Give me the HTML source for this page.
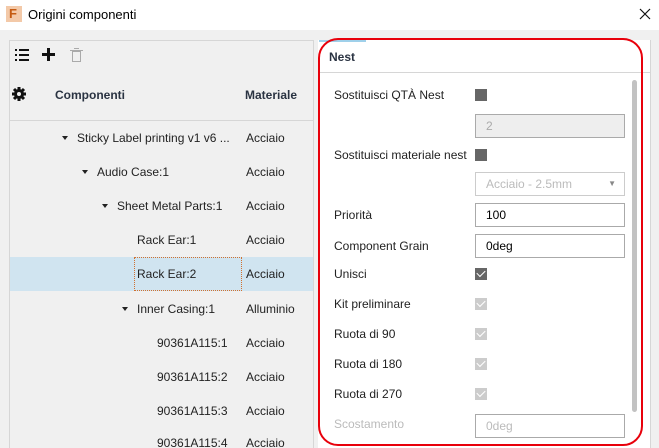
<!DOCTYPE html><html style="overflow:hidden;height:448px"><head><style>
body{margin:0;width:659px;height:448px;background:#f0f0f0;font-family:"Liberation Sans",sans-serif;font-size:12px;color:#222;position:relative;overflow:hidden}
.a{position:absolute;white-space:nowrap}
.cb{position:absolute;width:12px;height:12px;background:#666}
.cbd{position:absolute;width:12px;height:12px;background:#ccc}
.in{position:absolute;left:475px;width:148px;height:22px;border:1px solid #aaa;background:#fff;line-height:22px;text-indent:10px}
.ck{position:absolute;left:2px;top:2px;width:7px;height:4px;border-left:1.5px solid #fff;border-bottom:1.5px solid #fff;transform:rotate(-45deg)}
.tri{position:absolute;width:0;height:0;border-left:3px solid transparent;border-right:3px solid transparent;border-top:4px solid #222}
</style></head><body>
<div class="a" style="left:0;top:0;width:659px;height:30px;background:#fff"></div>
<div class="a" style="left:6px;top:6px;width:16px;height:16px;background:#f3c9a8"></div>
<div class="a" style="left:9px;top:6px;color:#c55a11;font-weight:bold;font-size:13px">F</div>
<div class="a" style="left:28px;top:7px;font-size:13px;color:#000">Origini componenti</div>
<svg class="a" style="left:639px;top:8px" width="12" height="12"><path d="M1 1L11 11M11 1L1 11" stroke="#111" stroke-width="1.2"/></svg>
<div class="a" style="left:9px;top:40px;width:303px;height:410px;border-left:1px solid #d6d6d6;border-top:1px solid #d6d6d6;border-right:1px solid #d6d6d6"></div>
<svg class="a" style="left:15px;top:47px" width="70" height="16"><g fill="#111"><rect x="0" y="2" width="2" height="2"/><rect x="4" y="2" width="10" height="2"/><rect x="0" y="7" width="2" height="2"/><rect x="4" y="7" width="10" height="2"/><rect x="0" y="12" width="2" height="2"/><rect x="4" y="12" width="10" height="2"/><rect x="27" y="6" width="13" height="3"/><rect x="32" y="1" width="3" height="13"/></g><g fill="none" stroke="#aaa"><rect x="57.5" y="4.5" width="8" height="10"/><path d="M55 3.5h13M59 1.5h5"/></g></svg>
<svg class="a" style="left:12px;top:87px" width="14" height="14" viewBox="0 0 14 14"><g fill="#111"><circle cx="7" cy="7" r="5"/><g stroke="#111" stroke-width="3"><path d="M7 0v14M0 7h14M2 2l10 10M12 2L2 12"/></g></g><circle cx="7" cy="7" r="2" fill="#f0f0f0"/></svg>
<div class="a" style="left:55px;top:88px;font-weight:bold;color:#2a3342">Componenti</div>
<div class="a" style="left:245px;top:88px;font-weight:bold;color:#2a3342">Materiale</div>
<div class="a" style="left:10px;top:120px;width:303px;height:1px;background:#d6d6d6"></div>
<div class="a" style="left:10px;top:257px;width:303px;height:34px;background:#d0e4f0"></div>
<div class="a" style="left:134px;top:257px;width:106px;height:32px;border:1px dotted #d07030"></div>
<div class="tri" style="left:62px;top:136px"></div><div class="a" style="left:77px;top:131px">Sticky Label printing v1 v6 ...</div><div class="a" style="left:246px;top:131px">Acciaio</div>
<div class="tri" style="left:82px;top:170px"></div><div class="a" style="left:97px;top:165px">Audio Case:1</div><div class="a" style="left:246px;top:165px">Acciaio</div>
<div class="tri" style="left:102px;top:204px"></div><div class="a" style="left:117px;top:199px">Sheet Metal Parts:1</div><div class="a" style="left:246px;top:199px">Acciaio</div>
<div class="a" style="left:137px;top:233px">Rack Ear:1</div><div class="a" style="left:246px;top:233px">Acciaio</div>
<div class="a" style="left:137px;top:267px">Rack Ear:2</div><div class="a" style="left:246px;top:267px">Acciaio</div>
<div class="tri" style="left:122px;top:307px"></div><div class="a" style="left:137px;top:302px">Inner Casing:1</div><div class="a" style="left:246px;top:302px">Alluminio</div>
<div class="a" style="left:157px;top:336px">90361A115:1</div><div class="a" style="left:246px;top:336px">Acciaio</div>
<div class="a" style="left:157px;top:370px">90361A115:2</div><div class="a" style="left:246px;top:370px">Acciaio</div>
<div class="a" style="left:157px;top:404px">90361A115:3</div><div class="a" style="left:246px;top:404px">Acciaio</div>
<div class="a" style="left:157px;top:436px">90361A115:4</div><div class="a" style="left:246px;top:436px">Acciaio</div>
<div class="a" style="left:318px;top:40px;width:332px;height:408px;background:#fff;border-right:1px solid #d6d6d6"></div>
<div class="a" style="left:319px;top:40px;width:47px;height:2px;background:#9fd0ea"></div>
<div class="a" style="left:319px;top:72px;width:331px;height:1px;background:#d6d6d6"></div>
<div class="a" style="left:329px;top:50px;font-weight:bold;color:#2a3342">Nest</div>
<div class="a" style="left:632px;top:80px;width:5px;height:332px;background:#c2c2c2;border-radius:3px"></div>
<div class="a" style="left:334px;top:88px">Sostituisci QTÀ Nest</div><div class="cb" style="left:475px;top:89px"></div>
<div class="in" style="top:114px;background:#eee;color:#aaa">2</div>
<div class="a" style="left:334px;top:148px">Sostituisci materiale nest</div><div class="cb" style="left:475px;top:149px"></div>
<div class="in" style="top:172px;color:#bbb;border-color:#ccc">Acciaio - 2.5mm<span style="position:absolute;right:8px;top:0;font-size:8px;color:#888">▼</span></div>
<div class="a" style="left:334px;top:208px">Priorità</div><div class="in" style="top:203px;color:#000">100</div>
<div class="a" style="left:334px;top:239px">Component Grain</div><div class="in" style="top:234px;color:#000">0deg</div>
<div class="a" style="left:334px;top:267px">Unisci</div><div class="cb" style="left:475px;top:268px"><div class="ck"></div></div>
<div class="a" style="left:334px;top:297px">Kit preliminare</div><div class="cbd" style="left:475px;top:298px"><div class="ck"></div></div>
<div class="a" style="left:334px;top:327px">Ruota di 90</div><div class="cbd" style="left:475px;top:328px"><div class="ck"></div></div>
<div class="a" style="left:334px;top:357px">Ruota di 180</div><div class="cbd" style="left:475px;top:358px"><div class="ck"></div></div>
<div class="a" style="left:334px;top:387px">Ruota di 270</div><div class="cbd" style="left:475px;top:388px"><div class="ck"></div></div>
<div class="a" style="left:334px;top:417px;color:#bbb">Scostamento</div><div class="in" style="top:414px;color:#bbb">0deg</div>
<div class="a" style="left:318px;top:38px;width:321px;height:404px;border:2px solid #e8000b;border-radius:20px"></div>
</body></html>
